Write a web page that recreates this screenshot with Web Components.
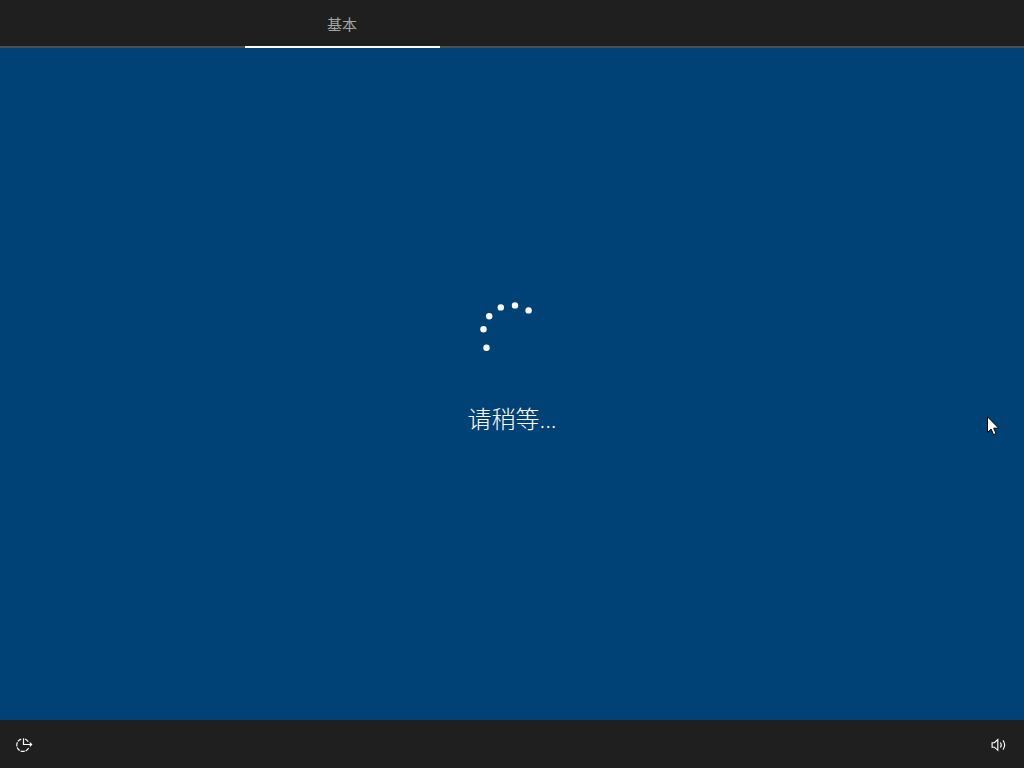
<!DOCTYPE html>
<html lang="zh-CN">
<head>
<meta charset="utf-8">
<title>基本</title>
<style>
html,body{margin:0;height:100%;overflow:hidden;background:#004275}
body{font-family:"Open Sans","Noto Sans CJK SC",sans-serif;color:#fff}
</style>
</head>
<body>
<setup-screen>
  <setup-tabs slot="top"><setup-tab>基本</setup-tab></setup-tabs>
  <busy-panel>请稍等...</busy-panel>
  <setup-footer slot="bottom"><ease-icon></ease-icon><volume-icon></volume-icon></setup-footer>
  <mouse-pointer slot="overlay"></mouse-pointer>
</setup-screen>
<script>
const define = (name, html) => {
  const t = document.createElement('template');
  t.innerHTML = html;
  customElements.define(name, class extends HTMLElement {
    constructor() {
      super();
      this.attachShadow({mode: 'open'}).append(t.content.cloneNode(true));
    }
  });
};

define('setup-screen', `<style>
:host{display:grid;grid-template-rows:48px 1fr 48px;width:100vw;height:100vh;position:relative;overflow:hidden;background:#004275}
</style><slot name="top"></slot><slot></slot><slot name="bottom"></slot><slot name="overlay"></slot>`);

define('setup-tabs', `<style>
:host{display:flex;box-sizing:border-box;padding-left:245px;background:linear-gradient(#4d4d4d,#4d4d4d) bottom/100% 2px no-repeat #1f1f1f}
</style><slot></slot>`);

define('setup-tab', `<style>
:host{display:flex;box-sizing:border-box;width:195px;height:48px;justify-content:center;border-bottom:2px solid #fff;color:#a6a6a6;font-size:15px;line-height:22px;padding:13px 1px 0 0}
</style><span><slot></slot></span>`);

define('busy-panel', `<style>
:host{display:flex;flex-direction:column;align-items:center;padding-top:244px;box-sizing:border-box}
svg{display:block;width:80px;height:70px}
p{margin:39px 0 0;font-size:24px;line-height:36px;font-weight:300;white-space:nowrap}
</style>
<svg viewBox="472 292 80 70" fill="#fff">
<circle cx="486.5" cy="347.8" r="3.2"/><circle cx="483.5" cy="329.2" r="3.2"/>
<circle cx="489.2" cy="316.2" r="3.2"/><circle cx="500.8" cy="307.4" r="3.2"/>
<circle cx="515" cy="305.4" r="3.2"/><circle cx="528.6" cy="310.4" r="3.2"/>
</svg><p><slot></slot></p>`);

define('setup-footer', `<style>
:host{display:flex;justify-content:space-between;align-items:center;padding:2px 16px 0 14px;box-sizing:border-box;background:#1f1f1f}
</style><slot></slot>`);

define('ease-icon', `<style>:host{display:block;width:20px;height:20px}svg{display:block}</style>
<svg width="20" height="20" viewBox="0 0 20 20" fill="none" stroke="#fff" stroke-width="1.2">
<path d="M7.2 4.1A6.3 6.3 0 1 0 15 12.2M11 4A6.3 6.3 0 0 1 14.3 6.8" stroke-dasharray="4.1 1"/>
<path d="M9.5 3.3V9.5H17.5M15.8 7.7L17.6 9.5L15.8 11.3"/></svg>`);

define('volume-icon', `<style>:host{display:block;width:18px;height:18px}svg{display:block}</style>
<svg width="18" height="18" viewBox="0 0 18 18" fill="none" stroke="#fff" stroke-width="1.15">
<path d="M2.1 6.7H4.4L7.8 3.5V14.3L4.4 11.2H2.1Z"/>
<path d="M10.4 6.5Q12.2 9 10.4 11.5M13 4.4Q16.3 9 13 13.6"/></svg>`);

define('mouse-pointer', `<style>:host{display:block;position:absolute;left:987px;top:416px;width:13px;height:21px}svg{display:block}</style>
<svg width="13" height="21" viewBox="0 0 13 21"><path d="M.5 .8V16.5L4.1 13.1L6.6 18.7L9.1 17.6L6.7 12.2H11.7Z" fill="#fff" stroke="#000" stroke-width="1"/></svg>`);
</script>
</body>
</html>
